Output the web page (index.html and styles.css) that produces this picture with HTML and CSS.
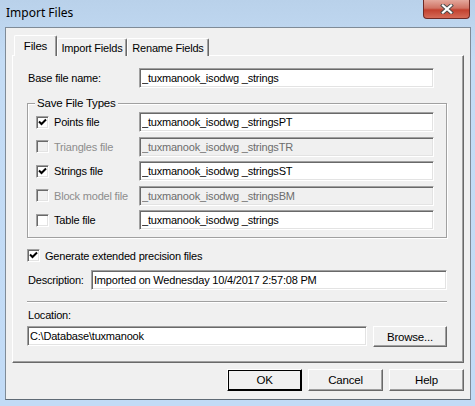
FILE: index.html
```html
<!DOCTYPE html>
<html lang="en">
<head>
  <meta charset="UTF-8">
  <title>Import Files</title>
  <link rel="stylesheet" href="styles.css">
</head>
<body>

  <div class="window">
    <div class="titlebar">
      <span class="title">Import Files</span>
      <button class="close-btn" aria-label="Close">
        <svg width="14" height="10" viewBox="0 0 14 10">
          <path d="M3 1.5 L11 8.5 M11 1.5 L3 8.5" stroke="#4a4a4a" stroke-width="4" stroke-linecap="square"/>
          <path d="M3 1.5 L11 8.5 M11 1.5 L3 8.5" stroke="#fff" stroke-width="2.2" stroke-linecap="square"/>
        </svg>
      </button>
    </div>

    <div class="client">
      <!-- tabs -->
      <div class="tabs">
        <div class="tab active tab-files">Files</div>
        <div class="tab tab-import">Import Fields</div>
        <div class="tab tab-rename">Rename Fields</div>
      </div>

      <div class="panel">
        <div class="base-row">
          <label class="base-label">Base file name:</label>
          <input type="text" class="field base-input" value="_tuxmanook_isodwg _strings">
        </div>

        <div class="group">
          <span class="legend">Save File Types</span>
          <div class="types">
            <div class="check"><span class="box checked"></span>Points file</div>
            <input type="text" class="field" value="_tuxmanook_isodwg _stringsPT">

            <div class="check disabled"><span class="box"></span>Triangles file</div>
            <input type="text" class="field" value="_tuxmanook_isodwg _stringsTR" disabled>

            <div class="check"><span class="box checked"></span>Strings file</div>
            <input type="text" class="field" value="_tuxmanook_isodwg _stringsST">

            <div class="check disabled"><span class="box"></span>Block model file</div>
            <input type="text" class="field" value="_tuxmanook_isodwg _stringsBM" disabled>

            <div class="check"><span class="box"></span>Table file</div>
            <input type="text" class="field" value="_tuxmanook_isodwg _strings">
          </div>
        </div>

        <div class="check gen-row"><span class="box checked"></span>Generate extended precision files</div>

        <div class="desc-row">
          <label class="desc-label">Description:</label>
          <input type="text" class="field desc-input" value="Imported on Wednesday 10/4/2017 2:57:08 PM">
        </div>

        <div class="separator"></div>

        <div class="loc-label">Location:</div>
        <div class="loc-row">
          <input type="text" class="field loc-input" value="C:\Database\tuxmanook">
          <button class="btn browse">Browse...</button>
        </div>
      </div>

      <div class="actions">
        <button class="btn default">OK</button>
        <button class="btn">Cancel</button>
        <button class="btn">Help</button>
      </div>
    </div>
  </div>

</body>
</html>
```

FILE: styles.css
```css
body {
  margin: 0;
  padding: 0;
  font-family: "Liberation Sans", Arial, sans-serif;
  font-size: 11px;
  letter-spacing: -0.2px;
  color: #000;
  background: #c4dcf4;
}

.window {
  width: 475px;
  height: 406px;
  box-sizing: border-box;
  background: linear-gradient(#b9d1ea, #c4dcf5 60px, #c2dbf6);
}

.titlebar {
  height: 27px;
  display: flex;
  align-items: flex-start;
  justify-content: space-between;
}

.title {
  font-family: "Noto Sans", "Open Sans", sans-serif;
  font-size: 12px;
  letter-spacing: 0;
  margin: 5px 0 0 6px;
  line-height: 16px;
}

.close-btn {
  width: 47px;
  height: 19px;
  margin: 0 5px 0 0;
  padding: 0;
  border: 1px solid #6e2a26;
  border-top: none;
  border-radius: 0 0 4px 4px;
  background: linear-gradient(#e4a89c, #d07364 45%, #c2412f 55%, #d56b58);
  display: flex;
  align-items: center;
  justify-content: center;
}

.client {
  margin: 0 4px 0 5px;
  height: 373px;
  box-sizing: border-box;
  border: 1px solid #7f8b97;
  border-bottom-color: #5f6a75;
  background: #f0f0f0;
  padding: 7px 6px 0 6px;
}

.tabs {
  display: flex;
  align-items: flex-end;
  margin-left: 2px;
  height: 21px;
  position: relative;
  z-index: 1;
  margin-bottom: -1px;
}

.tab {
  height: 18px;
  box-sizing: border-box;
  padding-top: 2px;
  border-top: 1px solid #fff;
  border-left: 1px solid #fff;
  border-right: 1px solid #696969;
  box-shadow: inset -1px 0 0 #a0a0a0;
  border-radius: 2px 2px 0 0;
  background: #f0f0f0;
  line-height: 14px;
  text-align: center;
}

.tab.active {
  height: 21px;
  padding-top: 3px;
  font-size: 11.5px;
}

.tab-files {
  width: 43px;
}

.tab-import {
  width: 70px;
}

.tab-rename {
  width: 82px;
}

.panel {
  height: 308px;
  box-sizing: border-box;
  border-top: 1px solid #fff;
  border-left: 1px solid #fff;
  border-right: 1px solid #696969;
  border-bottom: 1px solid #696969;
  box-shadow: inset -1px -1px 0 #a0a0a0;
  padding: 12px 14px 0 14px;
}

.field {
  height: 20px;
  box-sizing: border-box;
  margin: 0;
  padding: 0 3px 0 2px;
  border-top: 1px solid #a0a0a0;
  border-left: 1px solid #a0a0a0;
  border-right: 1px solid #fff;
  border-bottom: 1px solid #fff;
  box-shadow: inset 1px 1px 0 #696969, inset -1px -1px 0 #e3e3e3;
  background: #fff;
  font-family: "Liberation Sans", Arial, sans-serif;
  font-size: 11px;
  letter-spacing: -0.2px;
  color: #000;
  outline: none;
}

.field:disabled {
  background: #f0f0f0;
  color: #6d6d6d;
}

.base-row {
  display: flex;
  align-items: center;
}

.base-label {
  width: 112px;
  padding-left: 1px;
  box-sizing: border-box;
}

.base-input {
  width: 295px;
}

.group {
  margin-top: 15px;
  width: 420px;
  height: 135px;
  box-sizing: border-box;
  border: 1px solid #a0a0a0;
  box-shadow: inset 1px 1px 0 #fff, 1px 1px 0 #fff;
  padding: 0 11px 0 8px;
}

.legend {
  display: table;
  margin: -7px 0 0 -1px;
  padding: 0 2px;
  line-height: 13px;
  font-size: 11.5px;
  background: #f0f0f0;
}

.types {
  margin-top: 2px;
  display: grid;
  grid-template-columns: 103px 295px;
  grid-auto-rows: 20px;
  row-gap: 4.5px;
}

.check {
  display: flex;
  align-items: center;
  gap: 5px;
  white-space: nowrap;
}

.check.disabled {
  color: #8d8d8d;
}

.box {
  width: 13px;
  height: 13px;
  box-sizing: border-box;
  border-top: 1px solid #a0a0a0;
  border-left: 1px solid #a0a0a0;
  border-right: 1px solid #fff;
  border-bottom: 1px solid #fff;
  box-shadow: inset 1px 1px 0 #696969, inset -1px -1px 0 #e3e3e3;
  background: #fff;
  flex: none;
}

.check.disabled .box {
  background: #f0f0f0;
}

.box.checked {
  background: #fff url("data:image/svg+xml;utf8,<svg xmlns='http://www.w3.org/2000/svg' width='11' height='11'><path d='M2 4.5 L4.5 7 L9 2.5' fill='none' stroke='black' stroke-width='2'/></svg>") center / 11px 11px no-repeat;
}

.gen-row {
  margin-top: 11px;
  height: 13px;
}

.desc-row {
  margin-top: 8px;
  display: flex;
  align-items: center;
}

.desc-label {
  width: 64px;
  padding-left: 1px;
  box-sizing: border-box;
}

.desc-input {
  width: 356px;
}

.separator {
  margin-top: 11px;
  width: 420px;
  height: 1px;
  background: #a0a0a0;
  box-shadow: 0 1px 0 #fff;
}

.loc-label {
  margin-top: 7px;
  line-height: 13px;
  padding-left: 1px;
}

.loc-row {
  margin-top: 4px;
  display: flex;
  align-items: flex-start;
  gap: 6px;
}

.loc-input {
  width: 340px;
}

.btn {
  height: 21px;
  margin: 0;
  padding: 0;
  border-top: 1px solid #fff;
  border-left: 1px solid #fff;
  border-right: 1px solid #696969;
  border-bottom: 1px solid #696969;
  box-shadow: inset -1px -1px 0 #a0a0a0;
  background: #f0f0f0;
  font-family: "Liberation Sans", Arial, sans-serif;
  font-size: 11.5px;
  letter-spacing: -0.2px;
  color: #000;
}

.browse {
  width: 74px;
}

.actions {
  display: flex;
  justify-content: flex-end;
  gap: 6px;
  margin-top: 6px;
}

.actions .btn {
  width: 75px;
  height: 22px;
}

.btn.default {
  outline: 1px solid #000;
  outline-offset: -2px;
  border-color: #000;
  border-top-color: #fff;
  border-left-color: #fff;
}
```
